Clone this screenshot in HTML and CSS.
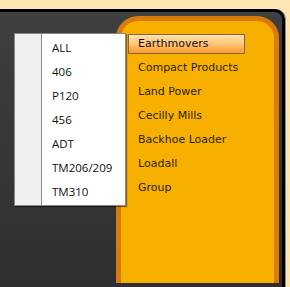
FILE: index.html
```html
<!DOCTYPE html>
<html lang="en">
<head>
    <meta charset="UTF-8">
    <title>Product Filter</title>
    <link rel="stylesheet" href="styles.css">
</head>
<body>

<div class="frame">
    <!-- Panel naranja con las divisiones -->
    <div class="panel">
        <ul class="divisions">
            <li class="selected">Earthmovers</li>
            <li>Compact Products</li>
            <li>Land Power</li>
            <li>Cecilly Mills</li>
            <li>Backhoe Loader</li>
            <li>Loadall</li>
            <li>Group</li>
        </ul>
    </div>

    <!-- Menu contextual de modelos -->
    <div class="context-menu">
        <div class="gutter"></div>
        <ul class="menu-items">
            <li>ALL</li>
            <li>406</li>
            <li>P120</li>
            <li>456</li>
            <li>ADT</li>
            <li>TM206/209</li>
            <li>TM310</li>
        </ul>
    </div>
</div>

</body>
</html>
```

FILE: styles.css
```css
body {
    margin: 0;
    background-color: #fde5b4;
    height: 287px;
    overflow: hidden;
}
.frame {
    position: relative;
    margin-top: 9px;
    width: 282px;
    height: 271px;
    border-top: 3px solid #000;
    border-right: 3px solid #000;
    border-top-right-radius: 10px;
    background: linear-gradient(#3f3f3f, #2f2f2f);
    box-shadow: 1px 0 0 #8a8a80;
    padding-top: 4px;
}
.panel {
    margin-left: 116px;
    margin-right: 3px;
    height: 249px;
    background-color: #f8b000;
    border: 5px solid #d97a0b;
    border-bottom: none;
    border-radius: 22px 22px 0 0;
    padding: 13px 0 0 7px;
}
.divisions {
    list-style: none;
    margin: 0;
    padding: 0;
    font-family: Tahoma, "DejaVu Sans", sans-serif;
    font-size: 11px;
    color: #2a1e00;
}
.divisions li {
    width: 106px;
    height: 18px;
    line-height: 18px;
    margin-bottom: 4px;
    padding-left: 9px;
    border: 1px solid transparent;
}
.divisions li.selected {
    border-color: #7e6848;
    background: linear-gradient(#ffe0ae, #ffc97c 45%, #ff9a2a);
    color: #111;
}
.context-menu {
    position: absolute;
    left: 14px;
    top: 21px;
    width: 110px;
    display: flex;
    background: #fff;
    border: 1px solid #888;
    box-shadow: 1px 1px 1px rgba(0, 0, 0, 0.45);
}
.gutter {
    width: 26px;
    background-color: #efefef;
    border-right: 1px solid #8a8a8a;
}
.menu-items {
    list-style: none;
    margin: 0;
    padding: 2px 0 1px 0;
    font-family: "Open Sans", "Noto Sans", sans-serif;
    font-size: 11.5px;
    color: #111;
}
.menu-items li {
    height: 24px;
    line-height: 24px;
    padding-left: 10px;
}
```
